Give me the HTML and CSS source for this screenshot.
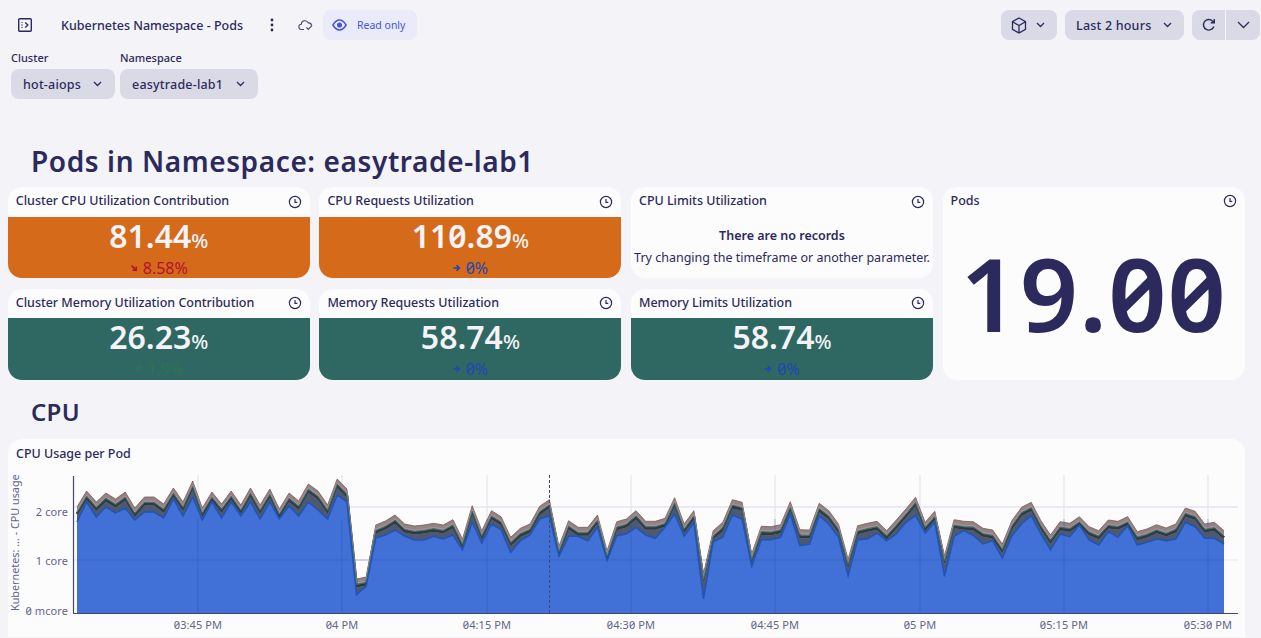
FILE: index.html
```html
<!DOCTYPE html>
<html lang="en">

<head>
  <meta charset="UTF-8">
  <title>Kubernetes Namespace - Pods</title>
  <link rel="stylesheet" href="styles.css">
</head>

<body>

  <header class="topbar">
    <svg class="ic-panel" width="16" height="16" viewBox="0 0 16 16" fill="none" stroke="#2c2a5c" stroke-width="1.4">
      <rect x="1.7" y="1.7" width="12.6" height="12.6" rx="1"/>
      <path d="M5 5v.8M5 7.6v.8M5 10.2v.8M8.3 5.5 10.8 8l-2.5 2.5"/>
    </svg>
    <span class="doc-title">Kubernetes Namespace - Pods</span>
    <svg class="ic-dots" width="4" height="14" viewBox="0 0 4 14" fill="#2c2a5c">
      <circle cx="2" cy="2" r="1.4"/><circle cx="2" cy="7" r="1.4"/><circle cx="2" cy="12" r="1.4"/>
    </svg>
    <svg class="ic-cloud" width="16" height="12" viewBox="0 0 16 12" fill="none" stroke="#45456f" stroke-width="1.1">
      <path d="M6 10.5H3.6a2.6 2.6 0 0 1-.3-5.2 3.6 3.6 0 0 1 6.9-1.4 3 3 0 0 1 3.3 2.4"/>
      <path d="M8.4 8.4l1.8 2 3.9-4"/>
    </svg>
    <div class="readonly">
      <svg width="15" height="12" viewBox="0 0 15 12" fill="none" stroke="#4556d6" stroke-width="1.5">
        <path d="M.9 6C3 2.6 5 1 7.5 1s4.500 1.600 6.600 5c-2.100 3.400-4.100 5-6.600 5S3 9.400.9 6z"/>
        <circle cx="7.500" cy="6" r="1.800" fill="#4556d6"/>
      </svg>
      <span>Read only</span>
    </div>
    <div class="topbar-right">
      <button class="btn btn-box">
        <svg width="16" height="17" viewBox="0 0 16 17" fill="none" stroke="#2c2a5c" stroke-width="1.3">
          <path d="M8 1 14.500 4.700v7.600L8 16 1.500 12.300V4.700zM1.500 4.700 8 8.500l6.500-3.800M8 8.500V16"/>
        </svg>
        <svg class="chev" width="9" height="6" viewBox="0 0 9 6"><path d="M1 1l3.500 3.500L8 1"/></svg>
      </button>
      <button class="btn btn-time">
        <span>Last 2 hours</span>
        <svg class="chev" width="9" height="6" viewBox="0 0 9 6"><path d="M1 1l3.500 3.500L8 1"/></svg>
      </button>
      <div class="split">
        <button class="btn split-l">
          <svg width="14" height="14" viewBox="0 0 14 14" fill="none" stroke="#2c2a5c" stroke-width="1.400">
            <path d="M11.800 8.500A5.300 5.300 0 1 1 10.500 3L12 4.500M12.300 1v3.700H8.700"/>
          </svg>
        </button>
        <button class="btn split-r">
          <svg width="13" height="8" viewBox="0 0 13 8" fill="none" stroke="#2c2a5c" stroke-width="1.300"><path d="M1 1l5.500 5.500L12 1"/></svg>
        </button>
      </div>
    </div>
  </header>

  <div class="filters">
    <div class="filter filter-cluster">
      <label>Cluster</label>
      <button class="btn btn-select">
        <span>hot-aiops</span>
        <svg class="chev" width="9" height="6" viewBox="0 0 9 6"><path d="M1 1l3.500 3.500L8 1"/></svg>
      </button>
    </div>
    <div class="filter filter-ns">
      <label>Namespace</label>
      <button class="btn btn-select">
        <span>easytrade-lab1</span>
        <svg class="chev" width="9" height="6" viewBox="0 0 9 6"><path d="M1 1l3.500 3.500L8 1"/></svg>
      </button>
    </div>
  </div>

  <h1 class="section-title">Pods in Namespace: easytrade-lab1</h1>

  <section class="tiles">
    <div class="tile">
      <div class="tile-head"><span>Cluster CPU Utilization Contribution</span><svg class="clock" viewBox="0 0 14 14"><circle cx="7" cy="7" r="5.600"/><path d="M7 4v3.300h2.300"/></svg></div>
      <div class="tile-value orange">
        <div class="num">81.44<small>%</small></div>
        <div class="trend red"><svg class="arrow" viewBox="0 0 8 8"><path d="M1 2.200 2.200 1 5.500 4.300V2.500H7V7H2.500V5.500h1.800z"/></svg>8.58%</div>
      </div>
    </div>
    <div class="tile">
      <div class="tile-head"><span>CPU Requests Utilization</span><svg class="clock" viewBox="0 0 14 14"><circle cx="7" cy="7" r="5.600"/><path d="M7 4v3.300h2.300"/></svg></div>
      <div class="tile-value orange">
        <div class="num">110.89<small>%</small></div>
        <div class="trend blue"><svg class="arrow" viewBox="0 0 8 8"><path d="M.5 3.200h3.700L3 1.200 4.300.8 7.500 4 4.300 7.200 3 6.800l1.200-2H.5z"/></svg>0%</div>
      </div>
    </div>
    <div class="tile">
      <div class="tile-head"><span>CPU Limits Utilization</span><svg class="clock" viewBox="0 0 14 14"><circle cx="7" cy="7" r="5.600"/><path d="M7 4v3.300h2.300"/></svg></div>
      <div class="tile-empty">
        <strong>There are no records</strong>
        <span>Try changing the timeframe or another parameter.</span>
      </div>
    </div>
    <div class="tile tile-pods">
      <div class="tile-head"><span>Pods</span><svg class="clock" viewBox="0 0 14 14"><circle cx="7" cy="7" r="5.600"/><path d="M7 4v3.300h2.300"/></svg></div>
      <div class="pods-num">19.00</div>
    </div>
    <div class="tile">
      <div class="tile-head"><span>Cluster Memory Utilization Contribution</span><svg class="clock" viewBox="0 0 14 14"><circle cx="7" cy="7" r="5.600"/><path d="M7 4v3.300h2.300"/></svg></div>
      <div class="tile-value green">
        <div class="num">26.23<small>%</small></div>
        <div class="trend dimgreen"><svg class="arrow" viewBox="0 0 8 8"><path d="M1 5.800 2.200 7 5.500 3.700v1.800H7V1H2.500v1.500h1.800z"/></svg>1.9%</div>
      </div>
    </div>
    <div class="tile">
      <div class="tile-head"><span>Memory Requests Utilization</span><svg class="clock" viewBox="0 0 14 14"><circle cx="7" cy="7" r="5.600"/><path d="M7 4v3.300h2.300"/></svg></div>
      <div class="tile-value green">
        <div class="num">58.74<small>%</small></div>
        <div class="trend blue"><svg class="arrow" viewBox="0 0 8 8"><path d="M.5 3.200h3.700L3 1.200 4.300.8 7.500 4 4.300 7.200 3 6.800l1.200-2H.5z"/></svg>0%</div>
      </div>
    </div>
    <div class="tile">
      <div class="tile-head"><span>Memory Limits Utilization</span><svg class="clock" viewBox="0 0 14 14"><circle cx="7" cy="7" r="5.600"/><path d="M7 4v3.300h2.300"/></svg></div>
      <div class="tile-value green">
        <div class="num">58.74<small>%</small></div>
        <div class="trend blue"><svg class="arrow" viewBox="0 0 8 8"><path d="M.5 3.200h3.700L3 1.200 4.300.8 7.500 4 4.300 7.200 3 6.800l1.200-2H.5z"/></svg>0%</div>
      </div>
    </div>
  </section>

  <h2 class="section-title section-cpu">CPU</h2>

  <section class="chart-card">
    <div class="tile-head chart-head"><span>CPU Usage per Pod</span></div>
    <svg id="chart" class="chart" width="1237" height="168" viewBox="8 470 1237 168"></svg>
  </section>

  <script src="chart.js"></script>

</body>

</html>
```

FILE: styles.css
```css
* {
  box-sizing: border-box;
}

html,
body {
  height: 638px;
  overflow: hidden;
}

body {
  margin: 0;
  background-color: #f3f3f8;
  color: #2c2a5c;
  font-family: "Noto Sans", "Inter", sans-serif;
  font-feature-settings: "zero";
  font-size: 12px;
}

.topbar {
  display: flex;
  align-items: center;
  height: 30px;
  margin-top: 10px;
  padding-left: 17px;
}

.ic-panel {
  margin-right: 28px;
}

.doc-title {
  font-size: 12.5px;
  font-weight: 500;
  width: 209px;
}

.ic-dots {
  margin-right: 24px;
}

.ic-cloud {
  margin-right: 9px;
}

.readonly {
  display: flex;
  align-items: center;
  gap: 10px;
  height: 30px;
  width: 94px;
  padding-left: 9px;
  border-radius: 8px;
  background-color: #e9ebf8;
  color: #4556d6;
  font-size: 10.5px;
}

.topbar-right {
  display: flex;
  gap: 8px;
  margin-left: auto;
  margin-right: 1px;
}

.btn {
  display: flex;
  align-items: center;
  justify-content: space-between;
  height: 30px;
  border: none;
  border-radius: 8px;
  background-color: #dadae6;
  color: #2c2a5c;
  font-family: inherit;
  font-feature-settings: inherit;
  font-size: 12.5px;
  font-weight: 500;
  letter-spacing: 0.2px;
}

.chev {
  fill: none;
  stroke: #2c2a5c;
  stroke-width: 1.300;
}

.btn-box {
  width: 56px;
  padding: 0 12px 0 10px;
}

.btn-time {
  width: 119px;
  padding: 0 12px 0 11px;
}

.split {
  display: flex;
  gap: 1px;
}

.split-l {
  width: 33px;
  justify-content: center;
  border-radius: 8px 0 0 8px;
}

.split-r {
  width: 34px;
  justify-content: center;
  border-radius: 0 8px 8px 0;
}

.filters {
  display: flex;
  gap: 5px;
  margin: 11px 0 0 11px;
}

.filter label {
  display: block;
  height: 18px;
  font-size: 11px;
  line-height: 14px;
  font-weight: 500;
}

.filter-cluster .btn-select {
  width: 104px;
}

.filter-ns .btn-select {
  width: 138px;
}

.btn-select {
  padding: 0 13px 0 12px;
}

.section-title {
  margin: 0;
  padding-left: 31px;
  font-size: 28px;
  line-height: 36px;
  font-weight: 600;
  letter-spacing: 0.6px;
}

.filters + .section-title {
  margin-top: 44px;
}

.tiles {
  display: grid;
  grid-template-columns: repeat(4, 302px);
  grid-template-rows: 91px 91px;
  column-gap: 9.600px;
  row-gap: 11px;
  margin: 8px 0 0 7.800px;
}

.tile {
  display: flex;
  flex-direction: column;
  border-radius: 14px;
  background-color: #fcfcfd;
  overflow: hidden;
}

.tile-pods {
  grid-column: 4;
  grid-row: 1 / 3;
}

.tile-head {
  display: flex;
  align-items: center;
  justify-content: space-between;
  height: 29px;
  flex: none;
  padding: 0 8px 3px 8px;
  font-size: 12.5px;
  font-weight: 500;
  letter-spacing: -0.02px;
}

.tile-head .clock {
  margin-top: 2px;
}

.tile:nth-child(-n+3) .tile-head {
  height: 30px;
}

.clock {
  width: 14px;
  height: 14px;
  fill: none;
  stroke: #2c2a5c;
  stroke-width: 1.200;
}

.tile-value {
  flex: 1;
  display: flex;
  flex-direction: column;
  align-items: center;
  color: #f3f3f8;
}

.orange {
  background-color: #d56b1a;
}

.green {
  background-color: #2f6862;
}

.num {
  margin-bottom: -1px;
  font-size: 32px;
  line-height: 38px;
  font-weight: 600;
}

.num small {
  font-size: 20px;
  font-weight: 500;
}

.trend {
  display: flex;
  align-items: center;
  gap: 5px;
  font-size: 16px;
  line-height: 18px;
}

.arrow {
  width: 8px;
  height: 8px;
  fill: currentColor;
}

.red {
  color: #b3122f;
}

.blue {
  color: #2146b4;
}

.dimgreen {
  color: #2e7350;
}

.tile-empty {
  display: flex;
  flex-direction: column;
  align-items: center;
  gap: 6px;
  margin-top: 11px;
  font-size: 12.5px;
  line-height: 16px;
  white-space: nowrap;
}

.tile-empty strong {
  font-weight: 600;
}

.pods-num {
  flex: 1;
  display: flex;
  align-items: center;
  justify-content: center;
  padding-bottom: 12px;
  font-size: 102px;
  font-weight: 600;
  letter-spacing: 1px;
}

.section-cpu {
  margin-top: 14px;
  font-size: 24px;
  letter-spacing: 0.3px;
}

.chart-card {
  height: 198px;
  margin: 9px 16px 0 8px;
  border-radius: 14px 14px 0 0;
  background-color: #fcfcfd;
}

.chart-head {
  height: 30px;
  padding-bottom: 2px;
}

.chart {
  display: block;
}

.chart text {
  fill: #63648c;
  font-size: 11px;
  letter-spacing: 0.1px;
}

.chart .axis-title {
  font-size: 10.8px;
  letter-spacing: 0;
}
```

FILE: chart.js
```js
// stacked cpu chart, y values are in page pixels
let top_ = [508,492,503,494,500,493,509,498,498,505,489,503,482,509,493,505,492,506,489,506,490,510,494,502,485,492,506,480,490,580,578,526,522,516,525,527,
  526,524.3,526,520.7,540,506.7,531.7,511.7,517.7,538.3,529.3,525,507.3,500.7,547.3,521.7,528.3,528.3,516,551.7,522.7,520,511.7,522.3,522.3,519.3,498.7,525,511.7,575,531.7,523.3,500.7,503.3,555,527.3,527.7,525.7,502.7,530.7,531,504.3,511.7,525,
  560,526.7,524.3,522.3,531.7,521,510,498.3,523.3,512.3,556.7,520.7,522.3,522.7,529.3,531,545,521.7,508.3,503.3,521.7,536,522.7,524.3,517.7,527.7,531.7,521,522.3,517.7,532.7,530,525.7,529,525,509,512.3,525,523.3,531.7]

let base = [523,503,518,508,514,509,521,513,513,519,500,517,498,521,503,519,503,517,503,520,503,520,507,517,503,511,520,496,503,596,587,539,536,531,537,541,
  541,537.3,540,536,550.7,523.3,544,525,530.7,553.3,541.7,536,520,516.7,557.3,537.3,537.3,541.7,528.3,561.7,536.7,535,528.3,536,539.3,528.3,515,537.3,523.3,600,542.7,538.3,516,520,567.3,540.7,540.7,538.3,515,546.7,545,516.7,525,538.3,
  576.7,540.7,540,534,541.7,535,523.3,516.7,534,523.3,577.3,537.3,531.7,536.7,545,541.7,559,536.7,525,516.7,535,550.7,535,537.7,526,541,546,532.7,538.3,526.7,546,543.3,540,541.7,540,523.3,527.7,539.3,539.3,545]

let chart = document.querySelector("#chart")
let step = 1147 / 119
let bottom = 614

function xOf(i) {
  return (77 + i * step).toFixed(1)
}

function line(x1, y1, x2, y2, color, width, dash) {
  let d = dash ? ` stroke-dasharray="${dash}"` : ""
  return `<line x1="${x1}" y1="${y1}" x2="${x2}" y2="${y2}" stroke="${color}" stroke-width="${width}"${d}/>`
}

// line a fixed distance under the top edge, never below the blue edge
function edge(offset) {
  return top_.map((y, i) => xOf(i) + "," + Math.min(y + offset, base[i]).toFixed(1)).join(" ")
}

let html = ""

// grid
let gridX = [198, 342, 487, 631, 775, 920, 1064, 1208]
gridX.forEach(x => html += line(x, 476, x, bottom, "#dfdfea", 1))
html += line(74, 508, 1238, 508, "#e6e5f0", 1.500)
html += line(74, 561, 1238, 561, "#e6e5f0", 1)

// stack, dark to light going up
html += `<polygon points="${xOf(0)},${bottom} ${edge(0)} ${xOf(119)},${bottom}" fill="#8b8682"/>`
html += `<polyline points="${edge(7)}" fill="none" stroke="#2f3a3e" stroke-width="3"/>`

let bands = [
  [0, "#87525a", 0.8],
  [2, "#8f8a7c", 1],
  [4, "#c583ad", 1],
  [5.500, "#2f7a68", 1]
]
bands.forEach(b => html += `<polyline points="${edge(b[0])}" fill="none" stroke="${b[1]}" stroke-width="${b[2]}"/>`)

let dark = edge(8.500)
let blueEdge = base.map((y, i) => xOf(i) + "," + y).join(" ")
let back = base.map((y, i) => xOf(i) + "," + y).reverse().join(" ")
html += `<polygon points="${dark} ${back}" fill="#4e5870"/>`
html += `<polygon points="${xOf(0)},${bottom} ${blueEdge} ${xOf(119)},${bottom}" fill="#4170d6"/>`
html += `<polyline points="${blueEdge}" fill="none" stroke="#1f55b8" stroke-width="1.500"/>`

// grid shows faintly through the area
gridX.forEach(x => html += line(x, 520, x, bottom, "#2a55b0", 1).replace("/>", ' opacity="0.35"/>'))
html += line(77, 561, 1224, 561, "#2a55b0", 1).replace("/>", ' opacity="0.35"/>')

// crosshair and axes
html += line(549.500, 476, 549.500, bottom, "#45456f", 1, "3 2")
html += line(73.500, 477, 73.500, 614, "#45456f", 1.200)
html += line(73, 614.500, 1238, 614.500, "#45456f", 1.200)

// labels
let yLabels = [["2 core", 517], ["1 core", 566], ["0 mcore", 616]]
yLabels.forEach(l => html += `<text x="68" y="${l[1]}" text-anchor="end">${l[0]}</text>`)

let xLabels = [["03:45 PM", 198], ["04 PM", 342], ["04:15 PM", 487], ["04:30 PM", 631], ["04:45 PM", 775], ["05 PM", 920], ["05:15 PM", 1064], ["05:30 PM", 1208]]
xLabels.forEach(l => html += `<text x="${l[1]}" y="630" text-anchor="middle">${l[0]}</text>`)

html += `<text class="axis-title" transform="translate(19 612) rotate(-90)">Kubernetes: ... - CPU usage</text>`

chart.innerHTML = html
```
